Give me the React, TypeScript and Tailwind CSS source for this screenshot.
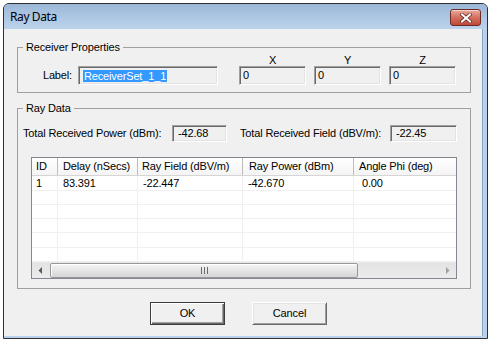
import React from "react";

const cols = [
  { w: "w-[26px] border-r", h: "ID", v: "1", hp: "pl-[4px]", vp: "pl-[4px]" },
  { w: "w-[80px] border-r", h: "Delay (nSecs)", v: "83.391", hp: "pl-[5px]", vp: "pl-[5px]" },
  { w: "w-[105px] border-r", h: "Ray Field (dBV/m)", v: "-22.447", hp: "pl-[4px]", vp: "pl-[5px]" },
  { w: "w-[111px] border-r", h: "Ray Power (dBm)", v: "-42.670", hp: "pl-[6px]", vp: "pl-[5px]" },
  { w: "w-[140px] border-r", h: "Angle Phi (deg)", v: "0.00", hp: "pl-[5px]", vp: "pl-[8px]" },
];

const rowHeights = ["h-[15px]", "h-[14px]", "h-[14px]", "h-[14px]", "h-[15px]", "h-[14px]"];

const sunken =
  "border border-t-[#a0a0a0] border-l-[#a0a0a0] border-b-white border-r-white shadow-[inset_1px_1px_0_#696969,inset_-1px_-1px_0_#e3e3e3] bg-[#f0f0f0] flex items-center";

export default function App() {
  return (
    <div className="w-[490px] h-[344px] bg-white pt-[3px] pl-[3px] font-['Liberation_Sans',Arial,sans-serif] text-[11px] tracking-[-0.15px] text-black leading-[13px]">
      <div className="w-[485px] h-[336px] border border-[#2f2f2f] rounded-t-[6px] flex flex-col overflow-hidden bg-[#b9d1ea]">
        {/* Title bar */}
        <div className="h-[25px] shrink-0 flex items-start justify-between pl-[6px] pr-[6px] bg-gradient-to-b from-[#9cb8d8] to-[#bcd3ec]">
          <div className="mt-[5px] font-['Noto_Sans',sans-serif] text-[12px] tracking-[-0.4px] leading-[16px] text-black">
            Ray Data
          </div>
          <div className="mt-[5px] w-[31px] h-[17px] rounded-[3px] border border-[#6e2b24] bg-gradient-to-b from-[#e9a99b] via-[#d27060] to-[#c0483a] shadow-[inset_0_1px_0_rgba(255,255,255,0.5)] flex items-center justify-center">
            <svg width="12" height="10" viewBox="0 0 12 10">
              <path d="M2 1.5 L10 8.5 M10 1.5 L2 8.5" stroke="#6a2c26" strokeWidth="3.6" strokeLinecap="square" />
              <path d="M2 1.5 L10 8.5 M10 1.5 L2 8.5" stroke="#ffffff" strokeWidth="2" strokeLinecap="square" />
            </svg>
          </div>
        </div>

        {/* Body */}
        <div className="flex flex-1">
          <div className="w-[479px] h-[307px] bg-[#f0f0f0] border-r border-[#8aa5c2] pt-[12px] pl-[13px] flex flex-col">
            {/* Receiver Properties */}
            <fieldset className="w-[454px] border border-[#a0a0a0] pb-[7px]">
              <legend className="ml-[5px] px-[3px] leading-[13px]">Receiver Properties</legend>
              <div className="flex items-end">
                <div className="w-[54px] text-right h-[19px] flex items-center justify-end">Label:</div>
                <div className={`ml-[6px] w-[140px] h-[19px] pl-[4px] ${sunken}`}>
                  <span className="bg-[#3399ff] text-white px-[1px] leading-[12px]">ReceiverSet_1_1</span>
                </div>
                <div className="ml-[21px] flex gap-[8px]">
                  {["X", "Y", "Z"].map((l) => (
                    <div key={l} className="flex flex-col w-[67px]">
                      <div className="h-[12px] leading-[12px] text-center">{l}</div>
                      <div className={`h-[19px] pl-[3px] ${sunken}`}>0</div>
                    </div>
                  ))}
                </div>
              </div>
            </fieldset>

            {/* Ray Data */}
            <fieldset className="mt-[9px] w-[454px] border border-[#a0a0a0] pb-[9px]">
              <legend className="ml-[5px] px-[3px] leading-[13px]">Ray Data</legend>
              <div className="mt-[10px] flex items-center pl-[5px]">
                <div className="w-[149px]">Total Received Power (dBm):</div>
                <div className={`w-[55px] h-[17px] pl-[5px] ${sunken}`}>-42.68</div>
                <div className="ml-[13px] w-[150px]">Total Received Field (dBV/m):</div>
                <div className={`w-[67px] h-[17px] pl-[5px] ${sunken}`}>-22.45</div>
              </div>

              {/* List view */}
              <div className="mt-[15px] ml-[13px] w-[426px] h-[122px] border border-[#828790] bg-white flex flex-col overflow-hidden">
                <div className="h-[18px] shrink-0 flex border-b border-[#d5d5d5] bg-gradient-to-b from-white to-[#f4f4f4] overflow-hidden">
                  {cols.map((c) => (
                    <div
                      key={c.h}
                      className={`${c.w} ${c.hp} shrink-0 border-[#bdbdbd] flex items-center whitespace-nowrap overflow-hidden`}
                    >
                      {c.h}
                    </div>
                  ))}
                </div>
                <div className="flex flex-col overflow-hidden">
                  {rowHeights.map((h, i) => (
                    <div key={i} className={`${h} shrink-0 flex border-b border-[#f0f0f0]`}>
                      {cols.map((c) => (
                        <div
                          key={c.h}
                          className={`${c.w} ${c.vp} shrink-0 border-[#f0f0f0] flex items-center whitespace-nowrap overflow-hidden`}
                        >
                          {i === 0 ? c.v : ""}
                        </div>
                      ))}
                    </div>
                  ))}
                </div>
                {/* Horizontal scrollbar */}
                <div className="h-[16px] shrink-0 flex items-center bg-gradient-to-b from-[#e3e3e3] to-[#ececec] border-t border-[#e8e8e8]">
                  <div className="w-[17px] h-full flex items-center justify-center">
                    <svg width="5" height="7" viewBox="0 0 5 7">
                      <path d="M4 0 L0.5 3.5 L4 7 Z" fill="#5a5a5a" />
                    </svg>
                  </div>
                  <div className="ml-[1px] w-[308px] h-[15px] rounded-[2px] border border-[#989898] bg-gradient-to-b from-[#f4f4f4] via-[#e6e6e6] to-[#d4d4d4] flex items-center justify-center shadow-[inset_1px_1px_0_#fff]">
                    <svg width="7" height="7" viewBox="0 0 7 7">
                      <path d="M0.5 0 V7 M3.5 0 V7 M6.5 0 V7" stroke="#6a6a6a" strokeWidth="1" />
                    </svg>
                  </div>
                  <div className="flex-1" />
                  <div className="w-[17px] h-full flex items-center justify-center">
                    <svg width="5" height="7" viewBox="0 0 5 7">
                      <path d="M1 0 L4.5 3.5 L1 7 Z" fill="#a0a0a0" />
                    </svg>
                  </div>
                </div>
              </div>
            </fieldset>

            {/* Buttons */}
            <div className="mt-[13px] ml-[133px] flex gap-[27px]">
              <button className="w-[75px] h-[23px] border border-[#3c3c3c] bg-[#f0f0f0] shadow-[inset_1px_1px_0_#fff,inset_-1px_-1px_0_#696969,inset_-2px_-2px_0_#a0a0a0] flex items-center justify-center">
                OK
              </button>
              <button className="w-[75px] h-[23px] border border-t-white border-l-white border-b-[#696969] border-r-[#696969] bg-[#f0f0f0] shadow-[inset_1px_1px_0_#e3e3e3,inset_-1px_-1px_0_#a0a0a0] flex items-center justify-center">
                Cancel
              </button>
            </div>
          </div>
          <div className="flex-1 bg-[#b9d1ea]" />
        </div>
        <div className="h-[2px] shrink-0 bg-[#b9d1ea]" />
      </div>
    </div>
  );
}
